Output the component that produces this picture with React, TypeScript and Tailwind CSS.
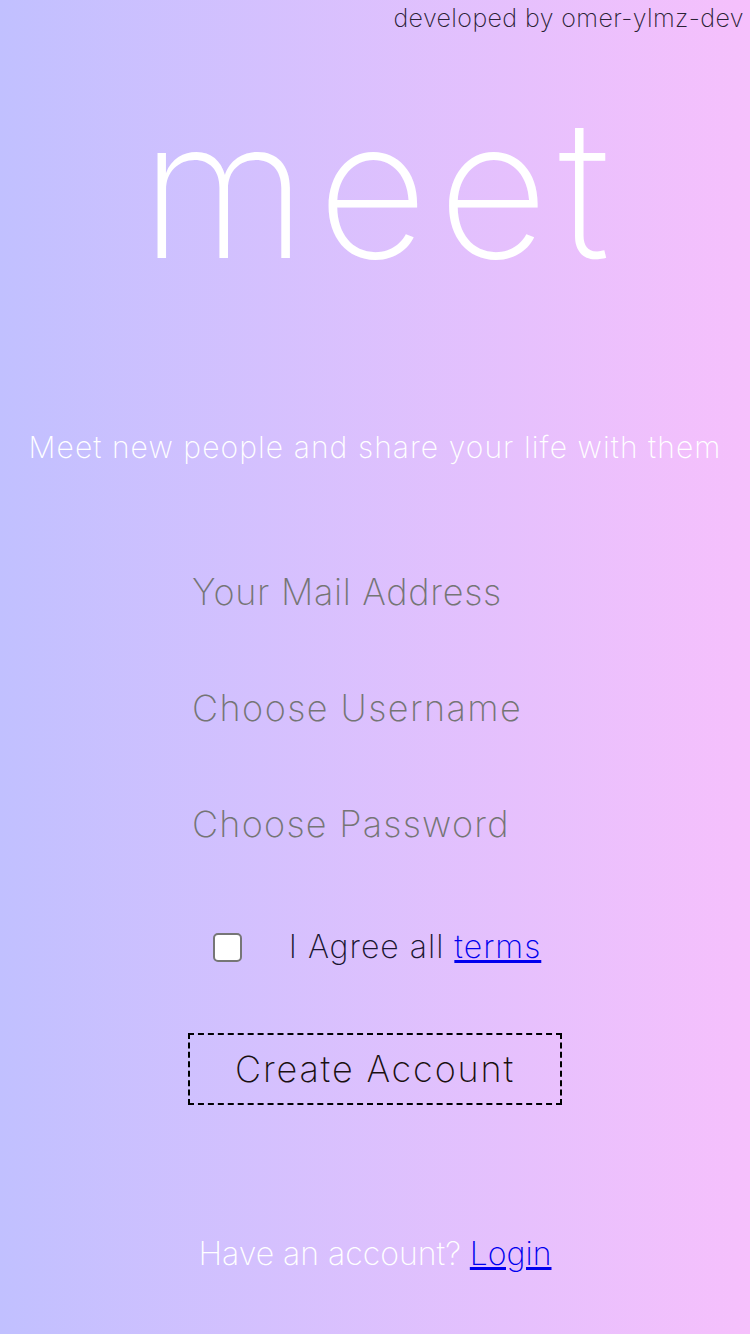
import React from 'react';

const App: React.FC = () => {
    return (
        <div className="min-h-[1334px] w-full bg-linear-to-r from-[#c1c0ff] to-[#f6c0fc] font-['Inter',sans-serif] font-extralight flex flex-col items-center">
            {/* credit */}
            <div className="w-full text-right pr-[6px] text-[25px] leading-[36px] tracking-[0.4px] text-[#2b2235]">
                developed by omer-ylmz-dev
            </div>

            {/* logo */}
            <h1 className="mt-[56px] pl-[10px] text-[192px] leading-none font-extralight text-white tracking-[10px]">
                meet
            </h1>

            {/* tagline */}
            <p className="mt-[143px] text-[30px] leading-[40px] tracking-[1.08px] text-white">
                Meet new people and share your life with them
            </p>

            {/* form */}
            <form className="mt-[95px] flex flex-col items-center">
                <input
                    type="email"
                    placeholder="Your Mail Address"
                    className="w-[374px] h-[60px] px-[4px] bg-transparent outline-none text-[36px] tracking-[0.7px] placeholder:text-[#757575]"
                />
                <input
                    type="text"
                    placeholder="Choose Username"
                    className="mt-[56px] w-[374px] h-[60px] px-[4px] bg-transparent outline-none text-[36px] tracking-[1.45px] placeholder:text-[#757575]"
                />
                <input
                    type="password"
                    placeholder="Choose Password"
                    className="mt-[56px] w-[374px] h-[60px] px-[4px] bg-transparent outline-none text-[36px] tracking-[1.25px] placeholder:text-[#757575]"
                />

                <div className="mt-[73px] flex items-center gap-[47px] pl-[4px]">
                    <div className="w-[29px] h-[29px] bg-white border-2 border-[#767676] rounded-[5px]" />
                    <span className="text-[32px] leading-[40px] tracking-[1px] text-[#1a1530]">
                        I Agree all <a href="#" className="text-[#0000ee] underline">terms</a>
                    </span>
                </div>

                <button
                    type="button"
                    className="mt-[66px] w-[374px] h-[72px] border-2 border-dashed border-black text-[36px] tracking-[1.85px] text-[#1a1010]"
                >
                    Create Account
                </button>
            </form>

            {/* footer */}
            <p className="mt-[129px] text-[32px] leading-[40px] text-white">
                Have an account? <a href="#" className="text-[#0000ee] underline">Login</a>
            </p>
        </div>
    );
};

export default App;
